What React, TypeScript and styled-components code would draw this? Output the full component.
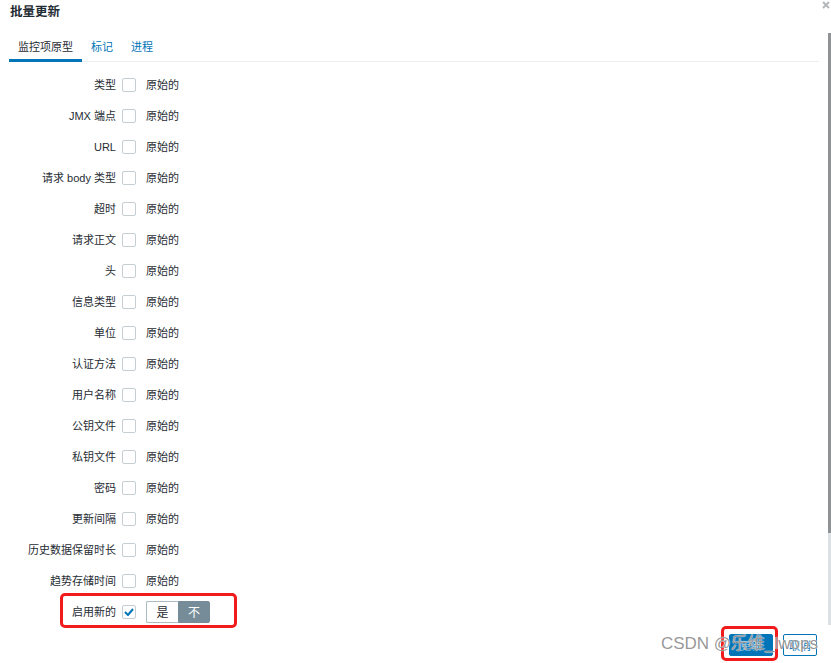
import React from "react";
import styled, { createGlobalStyle } from "styled-components";

const Global = createGlobalStyle`
  html, body { margin: 0; padding: 0; background: #ffffff; }
  body { font-family: "Liberation Sans", "Noto Sans CJK SC", Arial, sans-serif; color: #1f2c33; }
  * { box-sizing: border-box; }
`;

const Dialog = styled.div`
  position: relative;
  width: 831px;
  height: 663px;
  overflow: hidden;
  background: #fff;
  display: flex;
  flex-direction: column;
`;

const Header = styled.div`
  height: 33px;
  padding: 5px 0 0 10px;
`;

const Title = styled.h4`
  margin: 0;
  font-size: 12.5px;
  line-height: 15px;
  font-weight: bold;
  color: #1f2c33;
`;

const Close = styled.button`
  position: absolute;
  top: 0;
  right: 1px;
  width: 9px;
  height: 9px;
  padding: 0;
  border: 0;
  background: transparent;
  display: flex;
  align-items: center;
  justify-content: center;
`;

const Main = styled.div`
  display: flex;
  align-items: flex-start;
`;

const Content = styled.div`
  width: 810px;
  margin-left: 9px;
  padding-top: 1px;
`;

const ScrollTrack = styled.div`
  width: 3px;
  height: 592px;
  margin-left: 9px;
  background: #dbe1e5;
  display: flex;
  flex-direction: column;
`;

const ScrollThumb = styled.div`
  height: 500px;
  background: #8f9396;
`;

const TabBar = styled.ul`
  list-style: none;
  margin: 0;
  padding: 0;
  display: flex;
  border-bottom: 1px solid #ebeef0;
`;

const Tab = styled.li<{ $active?: boolean }>`
  padding: 6px 9px 5px;
  margin-bottom: -1px;
  font-size: 11px;
  line-height: 14px;
  color: ${(p) => (p.$active ? "#1f2c33" : "#0275b8")};
  border-bottom: 3px solid ${(p) => (p.$active ? "#0275b8" : "transparent")};
`;

const Form = styled.div`
  padding-top: 7px;
  display: flex;
  flex-direction: column;
`;

const Row = styled.div`
  position: relative;
  height: 31px;
  display: flex;
  align-items: center;
`;

const Label = styled.label`
  width: 107px;
  text-align: right;
  font-size: 11px;
  line-height: 14px;
  color: #1f2c33;
  white-space: nowrap;
`;

const Check = styled.span`
  width: 14px;
  height: 14px;
  margin-left: 6px;
  border: 1px solid #c5ced3;
  border-radius: 2px;
  background: #fff;
  display: flex;
  align-items: center;
  justify-content: center;
`;

const Original = styled.span`
  margin-left: 10px;
  font-size: 11px;
  line-height: 14px;
  color: #1f2c33;
`;

const Segmented = styled.div`
  margin-left: 10px;
  display: flex;
  height: 22px;
`;

const Segment = styled.span<{ $on?: boolean }>`
  width: 32px;
  display: flex;
  align-items: center;
  justify-content: center;
  font-size: 12px;
  border: 1px solid ${(p) => (p.$on ? "#768d99" : "#acbbc2")};
  border-right-width: ${(p) => (p.$on ? "1px" : "0")};
  border-radius: ${(p) => (p.$on ? "0 2px 2px 0" : "2px 0 0 2px")};
  background: ${(p) => (p.$on ? "#768d99" : "#fff")};
  color: ${(p) => (p.$on ? "#fff" : "#1f2c33")};
`;

const Highlight = styled.div<{ $l: number; $t: number; $w: number; $h: number }>`
  position: absolute;
  left: ${(p) => p.$l}px;
  top: ${(p) => p.$t}px;
  width: ${(p) => p.$w}px;
  height: ${(p) => p.$h}px;
  border: 3px solid #f21b1b;
  border-radius: 5px;
  pointer-events: none;
`;

const Footer = styled.div`
  position: relative;
  margin-top: 7px;
  padding-right: 14px;
  display: flex;
  justify-content: flex-end;
  gap: 10px;
`;

const BtnWrap = styled.div`
  position: relative;
`;

const Button = styled.button<{ $primary?: boolean }>`
  height: 22px;
  padding: 0 ${(p) => (p.$primary ? "10px" : "5px")};
  font-family: "Liberation Sans", "Noto Sans CJK SC", Arial, sans-serif;
  font-size: 11px;
  border-radius: 2px;
  border: 1px solid #0275b8;
  background: ${(p) => (p.$primary ? "#0275b8" : "#fff")};
  color: ${(p) => (p.$primary ? "rgba(255,255,255,0.55)" : "#0275b8")};
`;

const Watermark = styled.div`
  position: absolute;
  z-index: 2;
  right: 13px;
  top: 0;
  font-size: 17px;
  line-height: 20px;
  color: rgba(105, 105, 105, 0.7);
  text-shadow: 0 0 1px #fff, 0 0 1px rgba(255, 255, 255, 0.9);
  white-space: nowrap;
  pointer-events: none;
`;

const fields = [
  "类型",
  "JMX 端点",
  "URL",
  "请求 body 类型",
  "超时",
  "请求正文",
  "头",
  "信息类型",
  "单位",
  "认证方法",
  "用户名称",
  "公钥文件",
  "私钥文件",
  "密码",
  "更新间隔",
  "历史数据保留时长",
  "趋势存储时间",
];

export default function App() {
  return (
    <>
      <Global />
      <Dialog>
        <Header>
          <Title>批量更新</Title>
        </Header>
        <Close aria-label="close">
          <svg width="8" height="8" viewBox="0 0 8 8">
            <path d="M1 1 L7 7 M7 1 L1 7" stroke="#b4b8bb" strokeWidth="2" />
          </svg>
        </Close>
        <Main>
          <Content>
            <TabBar>
              <Tab $active>监控项原型</Tab>
              <Tab>标记</Tab>
              <Tab>进程</Tab>
            </TabBar>
            <Form>
              {fields.map((f) => (
                <Row key={f}>
                  <Label>{f}</Label>
                  <Check />
                  <Original>原始的</Original>
                </Row>
              ))}
              <Row>
                <Label>启用新的</Label>
                <Check>
                  <svg width="10" height="8" viewBox="0 0 10 8">
                    <path d="M1 4 L4 7 L9 1" fill="none" stroke="#0275b8" strokeWidth="2" />
                  </svg>
                </Check>
                <Segmented>
                  <Segment>是</Segment>
                  <Segment $on>不</Segment>
                </Segmented>
                <Highlight $l={51} $t={-3} $w={177} $h={35} />
              </Row>
            </Form>
          </Content>
          <ScrollTrack>
            <ScrollThumb />
          </ScrollTrack>
        </Main>
        <Footer>
          <BtnWrap>
            <Button $primary>更新</Button>
            <Highlight $l={-8} $t={-8} $w={57} $h={35} />
          </BtnWrap>
          <Button>取消</Button>
          <Watermark>CSDN @乐维_lwops</Watermark>
        </Footer>
      </Dialog>
    </>
  );
}
